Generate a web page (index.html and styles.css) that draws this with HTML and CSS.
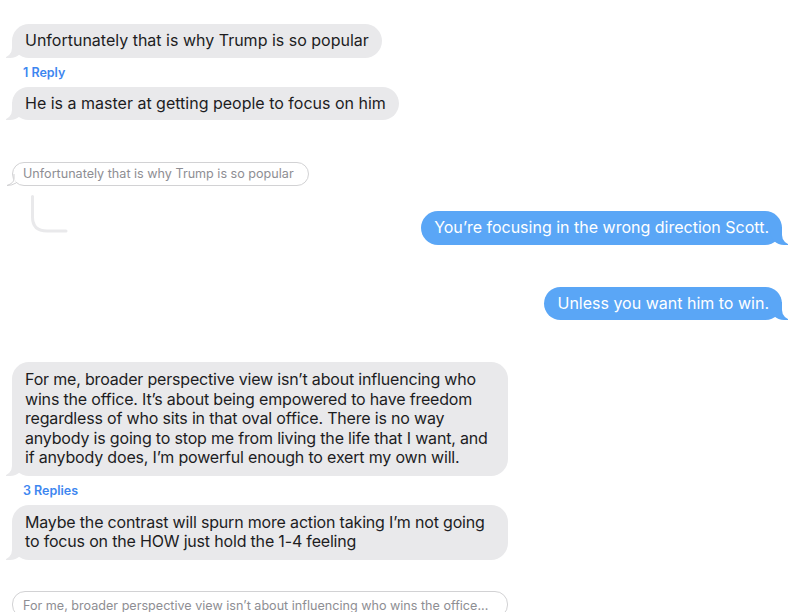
FILE: index.html
```html
<!DOCTYPE html>
<html lang="en">
<head>
  <meta charset="UTF-8">
  <meta name="viewport" content="width=device-width, initial-scale=1.0">
  <title>Messages</title>
  <link rel="stylesheet" href="styles.css">
</head>
<body>
  <div class="thread">
    <div class="msg them first">Unfortunately that is why Trump is so popular</div>
    <div class="replies">1 Reply</div>
    <div class="msg them">He is a master at getting people to focus on him</div>

    <div class="quote gap-quote">
      Unfortunately that is why Trump is so popular
      <svg class="quote-tail" width="10" height="12" viewBox="0 0 10 12">
        <path d="M8 0 V5 Q8 9 1 11.5 Q6 11.5 10 9" fill="#fff" stroke="#d2d2d4" stroke-width="1"/>
      </svg>
      <svg class="thread-line" width="42" height="40" viewBox="0 0 42 40">
        <path d="M2.5 1.5 V22 Q2.5 36 17 36 H36" fill="none" stroke="#e9e9eb" stroke-width="3" stroke-linecap="round"/>
      </svg>
    </div>

    <div class="msg me gap-me1">You’re focusing in the wrong direction Scott.</div>
    <div class="msg me gap-me2">Unless you want him to win.</div>

    <div class="msg them wide gap-long">For me, broader perspective view isn’t about influencing who wins the office. It’s about being empowered to have freedom regardless of who sits in that oval office. There is no way anybody is going to stop me from living the life that I want, and if anybody does, I’m powerful enough to exert my own will.</div>
    <div class="replies">3 Replies</div>
    <div class="msg them wide">Maybe the contrast will spurn more action taking I’m not going to focus on the HOW just hold the 1-4 feeling</div>

    <div class="quote wide-quote gap-last">For me, broader perspective view isn’t about influencing who wins the office...</div>
  </div>
</body>
</html>
```

FILE: styles.css
```css
body {
  margin: 0;
  padding: 0;
  background-color: #fff;
  font-family: Inter, "Liberation Sans", Arial, sans-serif;
  overflow: hidden;
}
.thread {
  display: flex;
  flex-direction: column;
  align-items: flex-start;
  padding: 24px 18px 0 12px;
}
.msg {
  position: relative;
  max-width: 470px;
  padding: 7px 13px 7px 13px;
  font-size: 16px;
  line-height: 19.5px;
  color: #1d1d1f;
  border-radius: 17px;
}
.msg.wide {
  padding-top: 8px;
  padding-bottom: 8px;
  letter-spacing: -0.18px;
}
.them {
  background-color: #e9e9eb;
}
.me {
  align-self: flex-end;
  background-color: #5aa6f6;
  color: #fff;
}
.them::before,
.me::before {
  content: "";
  position: absolute;
  bottom: 0;
  height: 18px;
  width: 18px;
}
.them::before {
  left: -6px;
  background-color: #e9e9eb;
  border-bottom-right-radius: 14px;
}
.them::after,
.me::after {
  content: "";
  position: absolute;
  bottom: 0;
  width: 10px;
  height: 18px;
  background-color: #fff;
}
.them::after {
  left: -10px;
  border-bottom-right-radius: 10px;
}
.me::before {
  right: -6px;
  background-color: #5aa6f6;
  border-bottom-left-radius: 14px;
}
.me::after {
  right: -10px;
  border-bottom-left-radius: 10px;
}
.replies {
  margin: 7px 0 6px 11px;
  font-size: 12.5px;
  line-height: 16px;
  font-weight: 600;
  color: #3d86f0;
}
.quote {
  position: relative;
  padding: 3px 14px 3px 10px;
  font-size: 12.6px;
  line-height: 16px;
  color: #8e8e93;
  border: 1px solid #d2d2d4;
  border-radius: 13px;
  background-color: #fff;
}
.quote-tail {
  position: absolute;
  left: -7px;
  bottom: -1px;
}
.thread-line {
  position: absolute;
  left: 17px;
  top: 32px;
}
.wide-quote {
  width: 470px;
  padding-top: 6px;
}
.gap-quote { margin-top: 42px; }
.gap-me1 { margin-top: 25px; }
.gap-me2 { margin-top: 42px; }
.gap-long { margin-top: 42px; }
.gap-last { margin-top: 31px; }
```
